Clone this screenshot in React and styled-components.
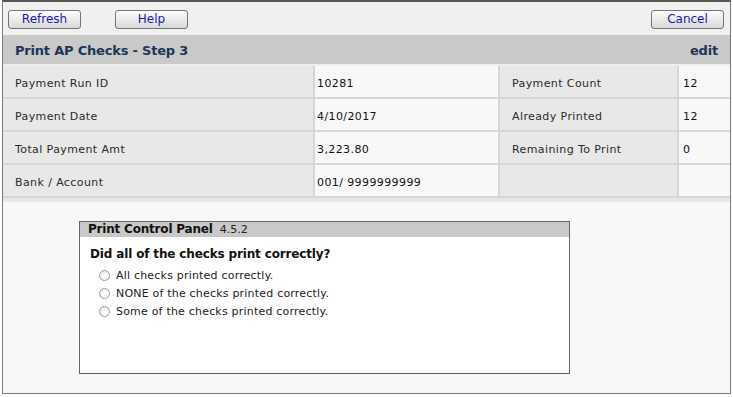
import React from 'react'
import styled, {createGlobalStyle} from "styled-components"

const GlobalStyle = createGlobalStyle`
    html, body {
        margin: 0;
        padding: 0;
        background: #ffffff;
    }
    body {
        font-family: "DejaVu Sans", Verdana, sans-serif;
        color: #222;
    }
`;

//外框
const Frame = styled.div`
    margin-left: 2px;
    width: 727px;
    border: 1px solid #7a7a7a;
    border-top: 2px solid #555;
    background: #f8f8f8;
    padding-bottom: 19px;
`;

const Toolbar = styled.div`
    display: flex;
    align-items: flex-start;
    height: 33px;
    box-sizing: border-box;
    padding: 8px 6px 0 5px;
    background: #f0f0f0;

    .spacer {
        flex: 1;
    }
`;

const ToolButton = styled.button`
    width: 73px;
    height: 19px;
    margin-right: ${p => p.$gap || 0}px;
    padding: 0;
    border: 1px solid #747474;
    border-radius: 3px;
    background: linear-gradient(#fdfdfd, #e9e9e9 55%, #d9d9d9);
    font-family: "DejaVu Sans", Verdana, sans-serif;
    font-size: 12px;
    color: #1b1bb3;
    line-height: 17px;
    cursor: pointer;
`;

const TitleBar = styled.div`
    display: flex;
    justify-content: space-between;
    align-items: center;
    height: 27px;
    padding: 2px 12px 0;
    background: #c8c9c8;
    border-bottom: 2px solid #eeeeee;
    font-size: 13px;
    font-weight: bold;
    letter-spacing: -0.2px;
    color: #1e3656;
`;

const InfoGrid = styled.div`
    display: grid;
    grid-template-columns: 310px 183px 177px 1fr;
    grid-auto-rows: 31px;
    gap: 2px;
    padding-bottom: 2px;
    background: #d6d6d6;
    border-bottom: 4px solid #e6e6e6;
`;

const Cell = styled.div`
    display: flex;
    align-items: center;
    padding: 3px 0 0 ${p => p.$label ? 12 : p.$pad || 2}px;
    background: ${p => p.$label ? "#e8e8e8" : "#f8f8f8"};
    font-size: 11px;
    letter-spacing: 0.4px;
    color: ${p => p.$label ? "#2a2a2a" : "#111"};
`;

//打印控制面板
const Panel = styled.div`
    margin: 19px 0 0 76px;
    width: 489px;
    height: 151px;
    border: 1px solid #666;
    background: #fff;
`;

const PanelHead = styled.div`
    display: flex;
    align-items: baseline;
    gap: 7px;
    height: 15px;
    padding-left: 8px;
    background: #c8c9c8;
    line-height: 15px;
    font-size: 12px;
    font-weight: bold;
    letter-spacing: -0.2px;
    color: #111;

    .ver {
        font-size: 11px;
        font-weight: normal;
        letter-spacing: 0;
        color: #222;
    }
`;

const Question = styled.div`
    padding: 10px 0 5px 10px;
    font-size: 12px;
    font-weight: bold;
    letter-spacing: -0.15px;
    color: #111;
`;

const Options = styled.div`
    display: flex;
    flex-direction: column;
    padding-left: 19px;
`;

const Option = styled.label`
    display: flex;
    align-items: center;
    gap: 6px;
    height: 18px;
    font-size: 11px;
    letter-spacing: 0.2px;
    color: #222;
`;

const Radio = styled.span`
    width: 9px;
    height: 9px;
    border-radius: 50%;
    border: 1px solid #9c9c9c;
    background: radial-gradient(circle at 65% 65%, #ffffff 30%, #e4e4e4 80%);
`;

const rows = [
    ["Payment Run ID", "10281", "Payment Count", "12"],
    ["Payment Date", "4/10/2017", "Already Printed", "12"],
    ["Total Payment Amt", "3,223.80", "Remaining To Print", "0"],
    ["Bank / Account", "001/ 9999999999", "", ""]
]

const options = [
    "All checks printed correctly.",
    "NONE of the checks printed correctly.",
    "Some of the checks printed correctly."
]

export default function App() {
    return (
        <>
            <GlobalStyle/>
            <Frame>
                <Toolbar>
                    <ToolButton $gap={34}>Refresh</ToolButton>
                    <ToolButton>Help</ToolButton>
                    <div className="spacer"/>
                    <ToolButton>Cancel</ToolButton>
                </Toolbar>
                <TitleBar>
                    <span>Print AP Checks - Step 3</span>
                    <span>edit</span>
                </TitleBar>
                <InfoGrid>
                    {rows.map(([l1, v1, l2, v2]) => (
                        <React.Fragment key={l1}>
                            <Cell $label>{l1}</Cell>
                            <Cell>{v1}</Cell>
                            <Cell $label>{l2}</Cell>
                            <Cell $pad={4}>{v2}</Cell>
                        </React.Fragment>
                    ))}
                </InfoGrid>
                <Panel>
                    <PanelHead>
                        Print Control Panel
                        <span className="ver">4.5.2</span>
                    </PanelHead>
                    <Question>Did all of the checks print correctly?</Question>
                    <Options>
                        {options.map(text => (
                            <Option key={text}>
                                <Radio/>
                                {text}
                            </Option>
                        ))}
                    </Options>
                </Panel>
            </Frame>
        </>
    )
}
